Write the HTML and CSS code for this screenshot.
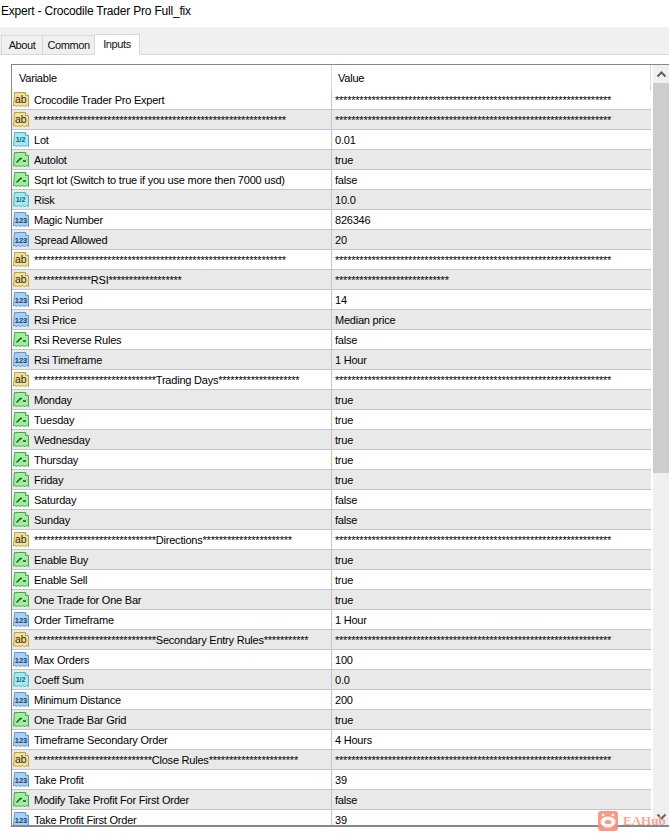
FILE: index.html
```html
<!DOCTYPE html>
<html lang="en">
<head>
	<meta charset="UTF-8">
	<title>Expert - Crocodile Trader Pro Full_fix</title>
	<link rel="stylesheet" href="styles.css">
</head>
<body>
	<svg class="defs" width="0" height="0">
		<symbol id="i-ab" viewBox="0 0 17 17">
			<path class="sheet ab" d="M1.5 1.5h11l3 3v11l-2-1-2 1-2-1-2 1-2-1-2 1-2-1-1 .5z" />
			<path class="fold ab" d="M12.5 1.5v3h3" />
		</symbol>
		<symbol id="i-half" viewBox="0 0 17 17">
			<path class="sheet half" d="M1.5 1.5h11l3 3v11l-2-1-2 1-2-1-2 1-2-1-2 1-2-1-1 .5z" />
			<path class="fold half" d="M12.5 1.5v3h3" />
		</symbol>
		<symbol id="i-num" viewBox="0 0 17 17">
			<path class="sheet num" d="M1.5 1.5h11l3 3v11l-2-1-2 1-2-1-2 1-2-1-2 1-2-1-1 .5z" />
			<path class="fold num" d="M12.5 1.5v3h3" />
		</symbol>
		<symbol id="i-bool" viewBox="0 0 17 17">
			<path class="sheet bool" d="M1.5 1.5h11l3 3v11l-2-1-2 1-2-1-2 1-2-1-2 1-2-1-1 .5z" />
			<path class="fold bool" d="M12.5 1.5v3h3" />
			<path class="tick" d="M3.5 11.5l4-4h1.5M10 10h3" />
		</symbol>
	</svg>

	<div class="title">Expert - Crocodile Trader Pro Full_fix</div>

	<ul class="tab-nav">
		<li class="tab-about"><a href="#about">About</a></li>
		<li class="tab-common"><a href="#common">Common</a></li>
		<li class="tab-inputs active"><a href="#inputs">Inputs</a></li>
	</ul>

	<div class="grid-box">
		<div class="grid">
			<div class="head">
				<div class="head-name">Variable</div>
				<div class="head-value">Value</div>
			</div>

			<div class="row"><div class="name"><svg class="icon" viewBox="0 0 17 17"><use href="#i-ab" /><text x="7.8" y="11.5" class="glyph-ab">ab</text></svg><span>Crocodile Trader Pro Expert</span></div><div class="value">********************************************************************</div></div>
			<div class="row"><div class="name"><svg class="icon" viewBox="0 0 17 17"><use href="#i-ab" /><text x="7.8" y="11.5" class="glyph-ab">ab</text></svg><span>**************************************************************</span></div><div class="value">********************************************************************</div></div>
			<div class="row"><div class="name"><svg class="icon" viewBox="0 0 17 17"><use href="#i-half" /><text x="7.5" y="10.5" class="glyph-half">1/2</text></svg><span>Lot</span></div><div class="value">0.01</div></div>
			<div class="row"><div class="name"><svg class="icon" viewBox="0 0 17 17"><use href="#i-bool" /></svg><span>Autolot</span></div><div class="value">true</div></div>
			<div class="row"><div class="name"><svg class="icon" viewBox="0 0 17 17"><use href="#i-bool" /></svg><span>Sqrt lot (Switch to true if you use more then 7000 usd)</span></div><div class="value">false</div></div>
			<div class="row"><div class="name"><svg class="icon" viewBox="0 0 17 17"><use href="#i-half" /><text x="7.5" y="10.5" class="glyph-half">1/2</text></svg><span>Risk</span></div><div class="value">10.0</div></div>
			<div class="row"><div class="name"><svg class="icon" viewBox="0 0 17 17"><use href="#i-num" /><text x="8" y="12" class="glyph-num">123</text></svg><span>Magic Number</span></div><div class="value">826346</div></div>
			<div class="row"><div class="name"><svg class="icon" viewBox="0 0 17 17"><use href="#i-num" /><text x="8" y="12" class="glyph-num">123</text></svg><span>Spread Allowed</span></div><div class="value">20</div></div>
			<div class="row"><div class="name"><svg class="icon" viewBox="0 0 17 17"><use href="#i-ab" /><text x="7.8" y="11.5" class="glyph-ab">ab</text></svg><span>**************************************************************</span></div><div class="value">********************************************************************</div></div>
			<div class="row"><div class="name"><svg class="icon" viewBox="0 0 17 17"><use href="#i-ab" /><text x="7.8" y="11.5" class="glyph-ab">ab</text></svg><span>**************RSI******************</span></div><div class="value">****************************</div></div>
			<div class="row"><div class="name"><svg class="icon" viewBox="0 0 17 17"><use href="#i-num" /><text x="8" y="12" class="glyph-num">123</text></svg><span>Rsi Period</span></div><div class="value">14</div></div>
			<div class="row"><div class="name"><svg class="icon" viewBox="0 0 17 17"><use href="#i-num" /><text x="8" y="12" class="glyph-num">123</text></svg><span>Rsi Price</span></div><div class="value">Median price</div></div>
			<div class="row"><div class="name"><svg class="icon" viewBox="0 0 17 17"><use href="#i-bool" /></svg><span>Rsi Reverse Rules</span></div><div class="value">false</div></div>
			<div class="row"><div class="name"><svg class="icon" viewBox="0 0 17 17"><use href="#i-num" /><text x="8" y="12" class="glyph-num">123</text></svg><span>Rsi Timeframe</span></div><div class="value">1 Hour</div></div>
			<div class="row"><div class="name"><svg class="icon" viewBox="0 0 17 17"><use href="#i-ab" /><text x="7.8" y="11.5" class="glyph-ab">ab</text></svg><span>******************************Trading Days********************</span></div><div class="value">********************************************************************</div></div>
			<div class="row"><div class="name"><svg class="icon" viewBox="0 0 17 17"><use href="#i-bool" /></svg><span>Monday</span></div><div class="value">true</div></div>
			<div class="row"><div class="name"><svg class="icon" viewBox="0 0 17 17"><use href="#i-bool" /></svg><span>Tuesday</span></div><div class="value">true</div></div>
			<div class="row"><div class="name"><svg class="icon" viewBox="0 0 17 17"><use href="#i-bool" /></svg><span>Wednesday</span></div><div class="value">true</div></div>
			<div class="row"><div class="name"><svg class="icon" viewBox="0 0 17 17"><use href="#i-bool" /></svg><span>Thursday</span></div><div class="value">true</div></div>
			<div class="row"><div class="name"><svg class="icon" viewBox="0 0 17 17"><use href="#i-bool" /></svg><span>Friday</span></div><div class="value">true</div></div>
			<div class="row"><div class="name"><svg class="icon" viewBox="0 0 17 17"><use href="#i-bool" /></svg><span>Saturday</span></div><div class="value">false</div></div>
			<div class="row"><div class="name"><svg class="icon" viewBox="0 0 17 17"><use href="#i-bool" /></svg><span>Sunday</span></div><div class="value">false</div></div>
			<div class="row"><div class="name"><svg class="icon" viewBox="0 0 17 17"><use href="#i-ab" /><text x="7.8" y="11.5" class="glyph-ab">ab</text></svg><span>******************************Directions**********************</span></div><div class="value">********************************************************************</div></div>
			<div class="row"><div class="name"><svg class="icon" viewBox="0 0 17 17"><use href="#i-bool" /></svg><span>Enable Buy</span></div><div class="value">true</div></div>
			<div class="row"><div class="name"><svg class="icon" viewBox="0 0 17 17"><use href="#i-bool" /></svg><span>Enable Sell</span></div><div class="value">true</div></div>
			<div class="row"><div class="name"><svg class="icon" viewBox="0 0 17 17"><use href="#i-bool" /></svg><span>One Trade for One Bar</span></div><div class="value">true</div></div>
			<div class="row"><div class="name"><svg class="icon" viewBox="0 0 17 17"><use href="#i-num" /><text x="8" y="12" class="glyph-num">123</text></svg><span>Order Timeframe</span></div><div class="value">1 Hour</div></div>
			<div class="row"><div class="name"><svg class="icon" viewBox="0 0 17 17"><use href="#i-ab" /><text x="7.8" y="11.5" class="glyph-ab">ab</text></svg><span>******************************Secondary Entry Rules***********</span></div><div class="value">********************************************************************</div></div>
			<div class="row"><div class="name"><svg class="icon" viewBox="0 0 17 17"><use href="#i-num" /><text x="8" y="12" class="glyph-num">123</text></svg><span>Max Orders</span></div><div class="value">100</div></div>
			<div class="row"><div class="name"><svg class="icon" viewBox="0 0 17 17"><use href="#i-half" /><text x="7.5" y="10.5" class="glyph-half">1/2</text></svg><span>Coeff Sum</span></div><div class="value">0.0</div></div>
			<div class="row"><div class="name"><svg class="icon" viewBox="0 0 17 17"><use href="#i-num" /><text x="8" y="12" class="glyph-num">123</text></svg><span>Minimum Distance</span></div><div class="value">200</div></div>
			<div class="row"><div class="name"><svg class="icon" viewBox="0 0 17 17"><use href="#i-bool" /></svg><span>One Trade Bar Grid</span></div><div class="value">true</div></div>
			<div class="row"><div class="name"><svg class="icon" viewBox="0 0 17 17"><use href="#i-num" /><text x="8" y="12" class="glyph-num">123</text></svg><span>Timeframe Secondary Order</span></div><div class="value">4 Hours</div></div>
			<div class="row"><div class="name"><svg class="icon" viewBox="0 0 17 17"><use href="#i-ab" /><text x="7.8" y="11.5" class="glyph-ab">ab</text></svg><span>*****************************Close Rules**********************</span></div><div class="value">********************************************************************</div></div>
			<div class="row"><div class="name"><svg class="icon" viewBox="0 0 17 17"><use href="#i-num" /><text x="8" y="12" class="glyph-num">123</text></svg><span>Take Profit</span></div><div class="value">39</div></div>
			<div class="row"><div class="name"><svg class="icon" viewBox="0 0 17 17"><use href="#i-bool" /></svg><span>Modify Take Profit For First Order</span></div><div class="value">false</div></div>
			<div class="row"><div class="name"><svg class="icon" viewBox="0 0 17 17"><use href="#i-num" /><text x="8" y="12" class="glyph-num">123</text></svg><span>Take Profit First Order</span></div><div class="value">39</div></div>
		</div>

		<div class="scroll">
			<div class="arrow"><svg width="11" height="7" viewBox="0 0 11 7"><path d="M1.5 5.5l4-4 4 4" /></svg></div>
			<div class="thumb"></div>
			<div class="track"></div>
			<div class="arrow"><svg width="11" height="7" viewBox="0 0 11 7"><path d="M1.5 1.5l4 4 4-4" /></svg></div>
		</div>
	</div>

	<div class="mark">
		<svg width="20" height="20" viewBox="0 0 20 20">
			<rect width="20" height="20" rx="3" fill="#fb8d76" />
			<circle cx="5" cy="4" r="1.3" fill="#fff" />
			<circle cx="15" cy="4" r="1.3" fill="#fff" />
			<ellipse cx="10" cy="11" rx="7.5" ry="5.5" fill="#fff" />
			<ellipse cx="10" cy="11" rx="3.5" ry="2" fill="#fb8d76" />
		</svg>
		<span>EAHub</span>
	</div>
</body>
</html>
```

FILE: styles.css
```css
body{
	margin:0;
	height:836px;
	overflow:hidden;
	position:relative;
	background:#fff;
	font-family:"Liberation Sans", Arial, sans-serif;
	font-size:11px;
	letter-spacing:-0.22px;
	color:#000;
}
.defs{
	position:absolute;
}
.title{
	height:27px;
	line-height:22px;
	padding-left:1px;
	font-size:12px;
	letter-spacing:-0.2px;
}
.tab-nav{
	display:flex;
	align-items:flex-end;
	height:28px;
	box-sizing:border-box;
	margin:0;
	padding:0 0 0 1px;
	list-style:none;
	background:#f0f0f0;
	border-bottom:1px solid #d9d9d9;
	letter-spacing:-0.4px;
}
.tab-nav li{
	height:19px;
	box-sizing:border-box;
	border:1px solid #d9d9d9;
	border-bottom:none;
	margin-left:-1px;
	text-align:center;
}
.tab-nav li:first-child{
	margin-left:0;
}
.tab-about{
	width:42px;
}
.tab-common{
	width:53px;
}
.tab-inputs{
	width:46px;
}
.tab-nav li.active{
	height:21px;
	background:#fff;
	margin-bottom:-1px;
}
.tab-nav a{
	display:block;
	line-height:19px;
	text-decoration:none;
	color:#111;
}
.tab-nav li.active a{
	line-height:18px;
}
.grid-box{
	display:flex;
	height:763px;
	box-sizing:border-box;
	margin:9px 0 0 11px;
	border:1px solid #828790;
	border-right:none;
	border-bottom-width:2px;
	overflow:hidden;
}
.grid{
	width:639px;
	flex:none;
	overflow:hidden;
	border-right:1px solid #fff;
}
.head{
	display:flex;
	height:25px;
	line-height:26px;
}
.head-name{
	width:320px;
	box-sizing:border-box;
	padding-left:7px;
	border-right:1px solid #d9d9d9;
}
.head-value{
	flex:1;
	padding-left:6px;
	border-right:1px solid #d9d9d9;
}
.row{
	display:flex;
	height:20px;
	line-height:21px;
	box-sizing:border-box;
	border-bottom:1px solid #c6c6c6;
}
.row:nth-child(odd){
	background:#e9e9e9;
}
.name{
	width:320px;
	display:flex;
	align-items:flex-start;
	box-sizing:border-box;
	padding-left:1px;
	white-space:nowrap;
	overflow:hidden;
	border-right:1px solid #c6c6c6;
}
.name span{
	margin-left:4px;
}
.value{
	flex:1;
	padding-left:3px;
	white-space:nowrap;
	overflow:hidden;
}
.icon{
	flex:none;
	width:17px;
	height:17px;
	margin-top:1px;
}
.sheet{
	stroke-width:1;
}
.fold{
	fill:#fff;
	stroke-width:1;
}
.sheet.ab{
	fill:#f3e096;
	stroke:#b9a04a;
}
.sheet.half{
	fill:#a6e8f0;
	stroke:#4fb4c6;
}
.sheet.num{
	fill:#a9d0f4;
	stroke:#5a98d2;
}
.sheet.bool{
	fill:#a0eca0;
	stroke:#46a846;
}
.fold.ab{
	stroke:#b9a04a;
}
.fold.half{
	stroke:#4fb4c6;
}
.fold.num{
	stroke:#5a98d2;
}
.fold.bool{
	stroke:#46a846;
}
.tick{
	fill:none;
	stroke:#14551a;
	stroke-width:1.3;
}
.glyph-ab,
.glyph-half,
.glyph-num{
	font-family:"Liberation Sans", Arial, sans-serif;
	letter-spacing:0;
	text-anchor:middle;
}
.glyph-ab{
	font-size:10.5px;
	fill:#2a2410;
}
.glyph-half{
	font-size:7px;
	font-weight:bold;
	fill:#0f5f78;
}
.glyph-num{
	font-size:7.5px;
	font-weight:bold;
	fill:#113c6c;
}
.scroll{
	width:16px;
	margin-left:1px;
	flex:none;
	display:flex;
	flex-direction:column;
	background:#f0f0f0;
}
.arrow{
	height:18px;
	flex:none;
	display:flex;
	align-items:center;
	justify-content:center;
}
.arrow path{
	fill:none;
	stroke:#606060;
	stroke-width:2;
}
.thumb{
	height:390px;
	flex:none;
	background:#cdcdcd;
}
.track{
	flex:1;
}
.mark{
	position:absolute;
	left:598px;
	top:811px;
	display:flex;
	align-items:center;
	gap:5px;
	font-family:"Liberation Serif", serif;
	font-size:13px;
	font-weight:bold;
	letter-spacing:0;
	color:#fb9c88;
	opacity:0.9;
}
```
